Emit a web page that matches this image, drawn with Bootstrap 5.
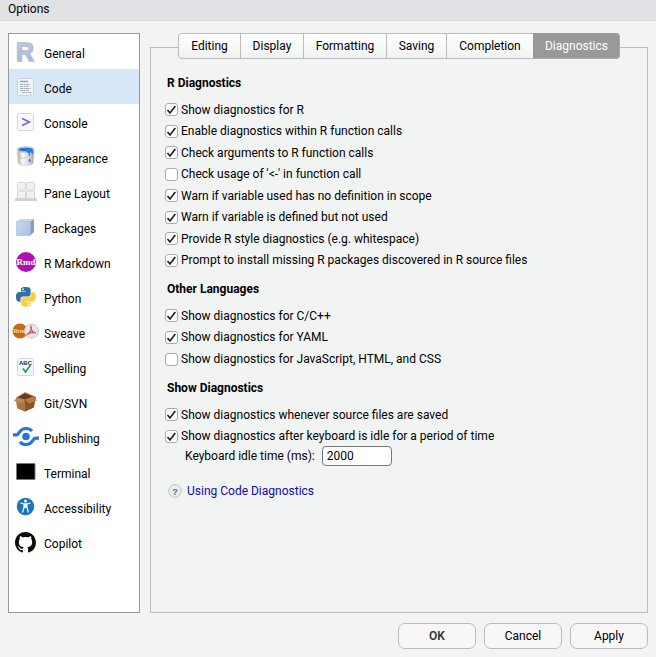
<!DOCTYPE html>
<html lang="en">
<head>
<meta charset="utf-8">
<meta name="viewport" content="width=device-width, initial-scale=1">
<title>Options</title>
<link href="https://cdn.jsdelivr.net/npm/bootstrap@5.3.0/dist/css/bootstrap.min.css" rel="stylesheet">
<style>
body { font-family: "Segoe UI", Roboto, sans-serif; font-size: 12px; line-height: 18px; color: #000; background: #f2f4f4; }
.title-bar { background: #e1e2e6; border-bottom: 1px solid #d6d7db; height: 21px; padding: 0 8px; line-height: 18px; }
.title-bar h1 { font-size: 12px; line-height: 18px; font-weight: 400; }
.dialog-body { padding: 12px 8px 8px; gap: 10px; }
.sections { width: 132px; background: #fff; border: 1px solid #979a9a; }
.sections a { height: 35px; padding: 4px 0 0 3px; gap: 4px; color: #000; text-decoration: none; }
.sections a.active { background: #d6e8f8; }
.sections svg { width: 28px; height: 24px; flex: none; margin-top: -4px; overflow: visible; }
.pane { border: 1px solid #bbbdbd; margin-top: 14px; padding: 0 14px 14px; }
.tab-strip { margin: -15px 0 14px 13px; }
.tab-strip .btn { font-size: 12px; line-height: 18px; padding: 3px 0; height: 26px; color: #000; background: linear-gradient(#fff, #f1f2f2); border: 1px solid #bbb; }
.tab-strip .btn:first-child { border-radius: 4px 0 0 4px; }
.tab-strip .btn:last-child { border-radius: 0 4px 4px 0; }
.tab-strip .btn.active { color: #fff; background: #999; border-color: #999 #aaa #aaa #999; }
.w-a { width: 63px; } .w-b { width: 64px; } .w-c { width: 84px; } .w-d { width: 61px; } .w-e { width: 88px; } .w-f { width: 87px; }
.group-title { font-size: 12px; line-height: 20px; font-weight: 700; margin: 0 0 6px 2px; }
.checks { display: grid; grid-auto-rows: 1fr; margin-bottom: 8px; }
.checks-8 { height: 172px; } .checks-3 { height: 65px; } .checks-2 { height: 43px; }
.checks label { display: flex; align-items: center; gap: 3px; }
.checks .form-check-input { width: 13px; height: 13px; margin: 0; border: 1px solid #a9abab; border-radius: 3px; background-color: #fff; box-shadow: none; flex: none; }
.checks .form-check-input:checked { background-size: 11px 11px; background-image: url("data:image/svg+xml,%3Csvg xmlns='http://www.w3.org/2000/svg' viewBox='0 0 11 11'%3E%3Cpath d='M1.5 6l2.5 3L9.3 2' fill='none' stroke='%23222' stroke-width='1.7'/%3E%3C/svg%3E"); }
.idle { padding-left: 20px; gap: 7px; margin-top: -9px; }
.idle input { width: 70px; height: 20px; font-size: 12px; line-height: 18px; padding: 0 4px; border: 1px solid #777; border-radius: 4px; color: #000; }
.help { gap: 5px; margin: 16px 0 0 3px; }
.help a { color: #1008b4; text-decoration: none; }
.help svg { width: 14px; height: 14px; }
.actions { padding: 2px 8px 8px; gap: 8px; }
.actions .btn { width: 78px; height: 26px; padding: 0; font-size: 12px; line-height: 18px; color: #000; background: #f7f7f8; border: 1px solid #b9bbbd; border-radius: 7px; }
.actions .btn-ok { color: #333; font-weight: 600; }
</style>
</head>
<body class="d-flex flex-column min-vh-100">
<header class="title-bar"><h1 class="m-0">Options</h1></header>
<main class="dialog-body d-flex flex-grow-1">
<nav class="sections d-flex flex-column" aria-label="Sections">
<a href="#" class="d-flex align-items-center"><svg viewBox="0 0 28 24"><defs><linearGradient id="gr" x2="0" y2="1"><stop stop-color="#c9d0e3"/><stop offset="1" stop-color="#a3b1d3"/></linearGradient></defs><text x="4" y="21" font-family="Liberation Sans, sans-serif" font-weight="700" font-size="25" fill="url(#gr)" stroke="#b3bdd7" stroke-width="1.500">R</text></svg>General</a>
<a href="#" class="d-flex align-items-center active" aria-current="page"><svg viewBox="0 0 28 24"><rect x="5.5" y="3.5" width="16" height="17" rx="1" fill="#f1f3f5" stroke="#ccd1d7"/><path d="M8 6.500h8" stroke="#55bdd0" stroke-width="1.300"/><path d="M8 9.500h10M8 11.500h8M8 13.500h11M8 15.500h9M10 17.500h9" stroke="#a8abb0" stroke-dasharray="3 .6 2 .5"/></svg>Code</a>
<a href="#" class="d-flex align-items-center"><svg viewBox="0 0 28 24"><rect x="5.5" y="3.500" width="16" height="17" rx="1" fill="#f7f8fa" stroke="#d5d8dd"/><path d="M10 8.500l7.500 3.500-7.500 3.500" fill="none" stroke="#6b63ec" stroke-width="1.500"/></svg>Console</a>
<a href="#" class="d-flex align-items-center"><svg viewBox="0 0 28 24"><defs><linearGradient id="ga"><stop stop-color="#aaadb0"/><stop offset=".3" stop-color="#f7f7f7"/><stop offset=".7" stop-color="#d9dbdd"/><stop offset="1" stop-color="#9b9ea2"/></linearGradient></defs><path d="M5.500 5l.7 13c1 3 14 3 15 0l.8-13z" fill="url(#ga)" stroke="#babcbf" stroke-width=".6"/><ellipse cx="13.700" cy="4.500" rx="8.500" ry="2.800" fill="#d5d8db" stroke="#aaaeb2" stroke-width=".7"/><ellipse cx="13.700" cy="4.500" rx="7.200" ry="1.800" fill="#2173d8"/><path d="M14 4.500l7 .5v3.500c-.8 1.500-1.500 0-1.500-1 0 0-1.300-1-1.500 1v2c-.8 1-1.500 0-1.500-1V8c-1.500-1-2.500 0-2.500-3z" fill="#2680ee"/><path d="M17.500 13.500c2 2.500 1 3.500 0 3.500s-1.500-1 0-3.500z" fill="#2680ee"/><path d="M6 9c3 6 8 5 11 1" fill="none" stroke="#b2b6bc" stroke-width=".7"/></svg>Appearance</a>
<a href="#" class="d-flex align-items-center"><svg viewBox="0 0 28 24"><path d="M6 16h16l3 3v2H3v-2z" fill="#cfd1d5"/><g fill="#f0f1f4" stroke="#d5d7da"><rect x="5.500" y="2.500" width="8" height="7.500" rx="1"/><rect x="14.500" y="2.500" width="8" height="7.500" rx="1"/><rect x="5.500" y="11" width="8" height="7.500" rx="1"/><rect x="14.500" y="11" width="8" height="7.500" rx="1"/></g></svg>Pane Layout</a>
<a href="#" class="d-flex align-items-center"><svg viewBox="0 0 28 24"><defs><linearGradient id="gp" x2="1" y2="1"><stop stop-color="#cbd7ed"/><stop offset="1" stop-color="#a9bee3"/></linearGradient></defs><path d="M4.500 6.500l3.500-2.500h14l-3.500 2.500z" fill="#c7d4e9"/><path d="M4.500 6.500h14v14h-14z" fill="url(#gp)" stroke="#a9bbdc" stroke-width=".6"/><path d="M18.500 6.500L22 4v13l-3.500 3.500z" fill="#839ecc"/></svg>Packages</a>
<a href="#" class="d-flex align-items-center"><svg viewBox="0 0 28 24"><circle cx="14" cy="12" r="10" fill="#ad12b0"/><text x="14" y="15" text-anchor="middle" font-family="Liberation Serif, serif" font-weight="700" font-size="9" fill="#fff">Rmd</text></svg>R Markdown</a>
<a href="#" class="d-flex align-items-center"><svg viewBox="0 0 28 24"><defs><path id="py" fill-rule="evenodd" d="M14.25.18l.9.2.73.26.59.3.45.32.34.34.25.34.16.33.1.3.04.26.02.2-.01.13V8.500l-.05.63-.13.55-.21.46-.26.38-.3.31-.33.25-.35.19-.35.14-.33.1-.3.07-.26.04-.21.02H8.770l-.69.05-.59.14-.5.22-.41.27-.33.32-.27.35-.2.36-.15.37-.1.35-.07.32-.04.27-.02.21v3.060H3.170l-.21-.03-.28-.07-.32-.12-.35-.18-.36-.26-.36-.36-.35-.46-.32-.59-.28-.73-.21-.88-.14-1.050-.05-1.230.06-1.220.16-1.040.24-.87.32-.71.36-.57.4-.44.42-.33.42-.24.4-.16.36-.1.32-.05.24-.01h.16l.06.01h8.160v-.83H6.180l-.01-2.750-.02-.37.05-.34.11-.31.17-.28.25-.26.31-.23.38-.2.44-.18.51-.15.58-.12.64-.1.71-.06.77-.04.84-.02 1.270.05zm-6.300 1.980l-.23.33-.08.41.08.41.23.34.33.22.41.09.41-.09.33-.22.23-.34.08-.41-.08-.41-.23-.33-.33-.22-.41-.09-.41.09z"/></defs><g transform="translate(4 2) scale(.82)"><use href="#py" fill="#3470a2"/><use href="#py" fill="#fbd03f" transform="rotate(180 12 12)"/></g></svg>Python</a>
<a href="#" class="d-flex align-items-center"><svg viewBox="0 0 28 24"><circle cx="8" cy="11" r="7.500" fill="#c9680e"/><text x="7.500" y="13" text-anchor="middle" font-family="Liberation Sans, sans-serif" font-size="6" fill="#fff">Rnw</text><circle cx="19.500" cy="11" r="7" fill="#e6e8ee" stroke="#c5c8d1"/><path d="M19 5.500c-1 2 .5 6 4.500 8M19 6c1.500 3-1 7-4.500 9M15 14.500c3-2.500 6-2.500 9-1.500" fill="none" stroke="#e24b4b" stroke-width="1.200"/></svg>Sweave</a>
<a href="#" class="d-flex align-items-center"><svg viewBox="0 0 28 24"><rect x="5.500" y="3.500" width="16" height="17" rx="1" fill="#f6f7f9" stroke="#d5d8dd"/><text x="13.500" y="10" text-anchor="middle" font-family="Liberation Sans, sans-serif" font-weight="700" font-size="6" fill="#333">ABC</text><path d="M11 13.500l2.500 3.500 5-7" fill="none" stroke="#239c79" stroke-width="1.800"/></svg>Spelling</a>
<a href="#" class="d-flex align-items-center"><svg viewBox="0 0 28 24"><path d="M4 8l9-5.500L24 7l-2 10-9 4.500L5 18z" fill="#8b582b"/><path d="M5 9l8 2v10.500L5 18z" fill="#ac7643"/><path d="M13 11l9-3v9.500l-9 4z" fill="#8a5626"/><path d="M5 8l8-5 8 3.500-8 3z" fill="#633c1c"/><path d="M5 7.500l8 2-2.500 4L2 11z" fill="#bf8851"/><path d="M13 9.500l8-3 4 4-8 3z" fill="#b47d46"/><path d="M4.500 7.500L13 2.500l8 3.500" fill="none" stroke="#c1935f"/></svg>Git/SVN</a>
<a href="#" class="d-flex align-items-center"><svg viewBox="0 0 28 24"><circle cx="14" cy="11.500" r="3.800" fill="#2474df"/><path id="swoosh" d="M1 9.800h3.500C7.500 9.800 7 3.500 14 3.500c2.800 0 4.800 1 6 2.700" fill="none" stroke="#2474df" stroke-width="3.200"/><use href="#swoosh" transform="rotate(180 14 11.500)"/></svg>Publishing</a>
<a href="#" class="d-flex align-items-center"><svg viewBox="0 0 28 24"><rect x="4.500" y="3.500" width="18.500" height="16" rx=".5" stroke="#777"/></svg>Terminal</a>
<a href="#" class="d-flex align-items-center"><svg viewBox="0 0 28 24"><circle cx="13.500" cy="11.500" r="8.700" fill="#1e73b9"/><circle cx="13.500" cy="6" r="1.500" fill="#fff"/><path d="M8.500 8l3.500 1v3.500l-1.500 5M18.500 8l-3.500 1v3.500l1.500 5M12 9h3" fill="none" stroke="#fff" stroke-width="1.200"/><path d="M12 8.500h3V13h-3z" fill="#fff"/></svg>Accessibility</a>
<a href="#" class="d-flex align-items-center"><svg viewBox="0 0 28 24"><path transform="translate(3 2) scale(1.310)" fill="#0c0c0c" d="M8 0C3.580 0 0 3.580 0 8c0 3.540 2.290 6.530 5.470 7.590.4.07.55-.17.55-.38 0-.19-.01-.82-.01-1.490-2.010.37-2.530-.49-2.690-.94-.09-.23-.48-.94-.82-1.130-.28-.15-.68-.52-.01-.53.63-.01 1.080.58 1.230.82.72 1.210 1.870.87 2.330.66.07-.52.28-.87.51-1.070-1.780-.2-3.640-.89-3.640-3.950 0-.87.31-1.590.82-2.150-.08-.2-.36-1.020.08-2.120 0 0 .67-.21 2.200.82.64-.18 1.320-.27 2-.27s1.360.09 2 .27c1.530-1.040 2.200-.82 2.200-.82.44 1.100.16 1.920.08 2.120.51.56.82 1.270.82 2.150 0 3.070-1.870 3.750-3.650 3.950.29.25.54.73.54 1.480 0 1.070-.01 1.930-.01 2.200 0 .21.15.46.55.38A8.010 8.010 0 0 0 16 8c0-4.420-3.580-8-8-8z"/></svg>Copilot</a>
</nav>
<section class="pane flex-grow-1">
<div class="tab-strip d-flex"><div class="btn-group" role="group" aria-label="Code options">
<button type="button" class="btn flex-grow-0 w-a">Editing</button>
<button type="button" class="btn flex-grow-0 w-b">Display</button>
<button type="button" class="btn flex-grow-0 w-c">Formatting</button>
<button type="button" class="btn flex-grow-0 w-d">Saving</button>
<button type="button" class="btn flex-grow-0 w-e">Completion</button>
<button type="button" class="btn flex-grow-0 w-f active">Diagnostics</button>
</div></div>
<h2 class="group-title">R Diagnostics</h2>
<div class="checks checks-8">
<label><input class="form-check-input" type="checkbox" checked>Show diagnostics for R</label>
<label><input class="form-check-input" type="checkbox" checked>Enable diagnostics within R function calls</label>
<label><input class="form-check-input" type="checkbox" checked>Check arguments to R function calls</label>
<label><input class="form-check-input" type="checkbox">Check usage of '&lt;-' in function call</label>
<label><input class="form-check-input" type="checkbox" checked>Warn if variable used has no definition in scope</label>
<label><input class="form-check-input" type="checkbox" checked>Warn if variable is defined but not used</label>
<label><input class="form-check-input" type="checkbox" checked>Provide R style diagnostics (e.g. whitespace)</label>
<label><input class="form-check-input" type="checkbox" checked>Prompt to install missing R packages discovered in R source files</label>
</div>
<h2 class="group-title">Other Languages</h2>
<div class="checks checks-3">
<label><input class="form-check-input" type="checkbox" checked>Show diagnostics for C/C++</label>
<label><input class="form-check-input" type="checkbox" checked>Show diagnostics for YAML</label>
<label><input class="form-check-input" type="checkbox">Show diagnostics for JavaScript, HTML, and CSS</label>
</div>
<h2 class="group-title">Show Diagnostics</h2>
<div class="checks checks-2">
<label><input class="form-check-input" type="checkbox" checked>Show diagnostics whenever source files are saved</label>
<label><input class="form-check-input" type="checkbox" checked>Show diagnostics after keyboard is idle for a period of time</label>
</div>
<div class="idle d-flex align-items-center"><label for="idle">Keyboard idle time (ms):</label><input id="idle" type="text" value="2000"></div>
<div class="help d-flex align-items-center"><svg viewBox="0 0 14 14"><circle cx="7" cy="7" r="6.300" fill="#e9edf1" stroke="#b9c3cb"/><text x="7" y="10.500" text-anchor="middle" font-family="Liberation Sans, sans-serif" font-weight="700" font-size="9" fill="#5b6670">?</text></svg><a href="#">Using Code Diagnostics</a></div>
</section>
</main>
<footer class="actions d-flex justify-content-end">
<button type="button" class="btn btn-ok">OK</button>
<button type="button" class="btn">Cancel</button>
<button type="button" class="btn">Apply</button>
</footer>
<script src="https://cdn.jsdelivr.net/npm/bootstrap@5.3.0/dist/js/bootstrap.bundle.min.js"></script>
</body>
</html>
